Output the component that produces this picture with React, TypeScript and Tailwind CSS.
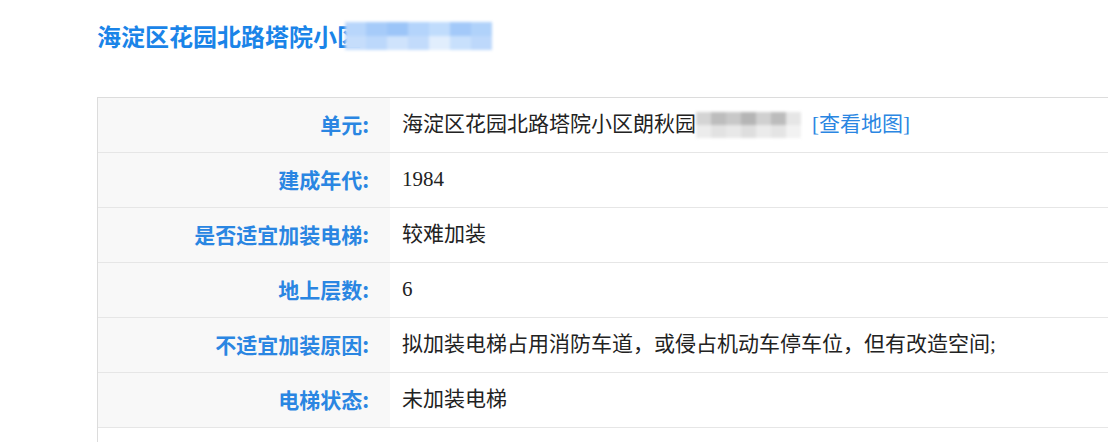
import React from 'react';

const rows: { label: string; value: React.ReactNode }[] = [
  {
    label: '单元:',
    value: (
      <span className="flex items-center">
        <span>海淀区花园北路塔院小区朗秋园</span>
        <Blur tone="gray" />
        <span className="ml-[11px] text-[#2a86e2]">[查看地图]</span>
      </span>
    ),
  },
  { label: '建成年代:', value: '1984' },
  { label: '是否适宜加装电梯:', value: '较难加装' },
  { label: '地上层数:', value: '6' },
  { label: '不适宜加装原因:', value: '拟加装电梯占用消防车道，或侵占机动车停车位，但有改造空间;' },
  { label: '电梯状态:', value: '未加装电梯' },
];

function Blur({ tone }: { tone: 'gray' | 'blue' }) {
  const top =
    tone === 'gray'
      ? ['#d4d4d4', '#bdbdbd', '#c8c8c8', '#b5b5b5', '#d0d0d0', '#bcbcbc', '#e6e6e6']
      : ['#b8d6fb', '#a6cbf9', '#9cc5f8', '#b4d4fb', '#c0dcfc', '#a3c9f9', '#b0d2fa'];
  const bottom =
    tone === 'gray'
      ? ['#ececec', '#e2e2e2', '#e8e8e8', '#dedede', '#ebebeb', '#e4e4e4', '#f2f2f2']
      : ['#c5ddfb', '#bcd8fb', '#cfe3fc', '#c2dbfb', '#e1eefd', '#c8e0fc', '#bdd8fb'];
  const w = tone === 'gray' ? 'w-[15px]' : 'w-[21px]';
  const h = tone === 'gray' ? 'h-[13px]' : 'h-[14px]';
  return (
    <span className={`relative flex flex-col blur-[1.5px] ${tone === 'blue' ? 'ml-[-16px]' : ''}`}>
      <span className="flex">
        {top.map((c, i) => (
          <span key={i} className={`${w} ${h}`} style={{ background: c }} />
        ))}
      </span>
      <span className="flex">
        {bottom.map((c, i) => (
          <span key={i} className={`${w} ${h}`} style={{ background: c }} />
        ))}
      </span>
    </span>
  );
}

export default function App() {
  return (
    <div className="h-[442px] overflow-hidden bg-white pl-[97px] font-['Liberation_Serif','Noto_Sans_CJK_SC',serif]">
      <div className="flex h-[97px] items-start pt-[22px]">
        <h1 className="font-['Noto_Sans_CJK_SC',sans-serif] text-[24px] font-bold leading-[28px] text-[#1a84e8]">
          海淀区花园北路塔院小区
        </h1>
        <Blur tone="blue" />
      </div>
      <div className="border-l border-t border-[#dcdcdc]">
        {rows.map((r) => (
          <div key={r.label} className="flex h-[55px] border-b border-[#e6e6e6]">
            <div className="flex w-[292px] items-center justify-end bg-[#f8f8f8] pr-[21px] font-['Noto_Sans_CJK_SC',sans-serif] text-[21px] font-semibold text-[#2a86e2]">
              {r.label}
            </div>
            <div className="flex flex-1 items-center pl-[12px] text-[21px] text-[#222]">{r.value}</div>
          </div>
        ))}
        <div className="h-[14px]" />
      </div>
    </div>
  );
}
